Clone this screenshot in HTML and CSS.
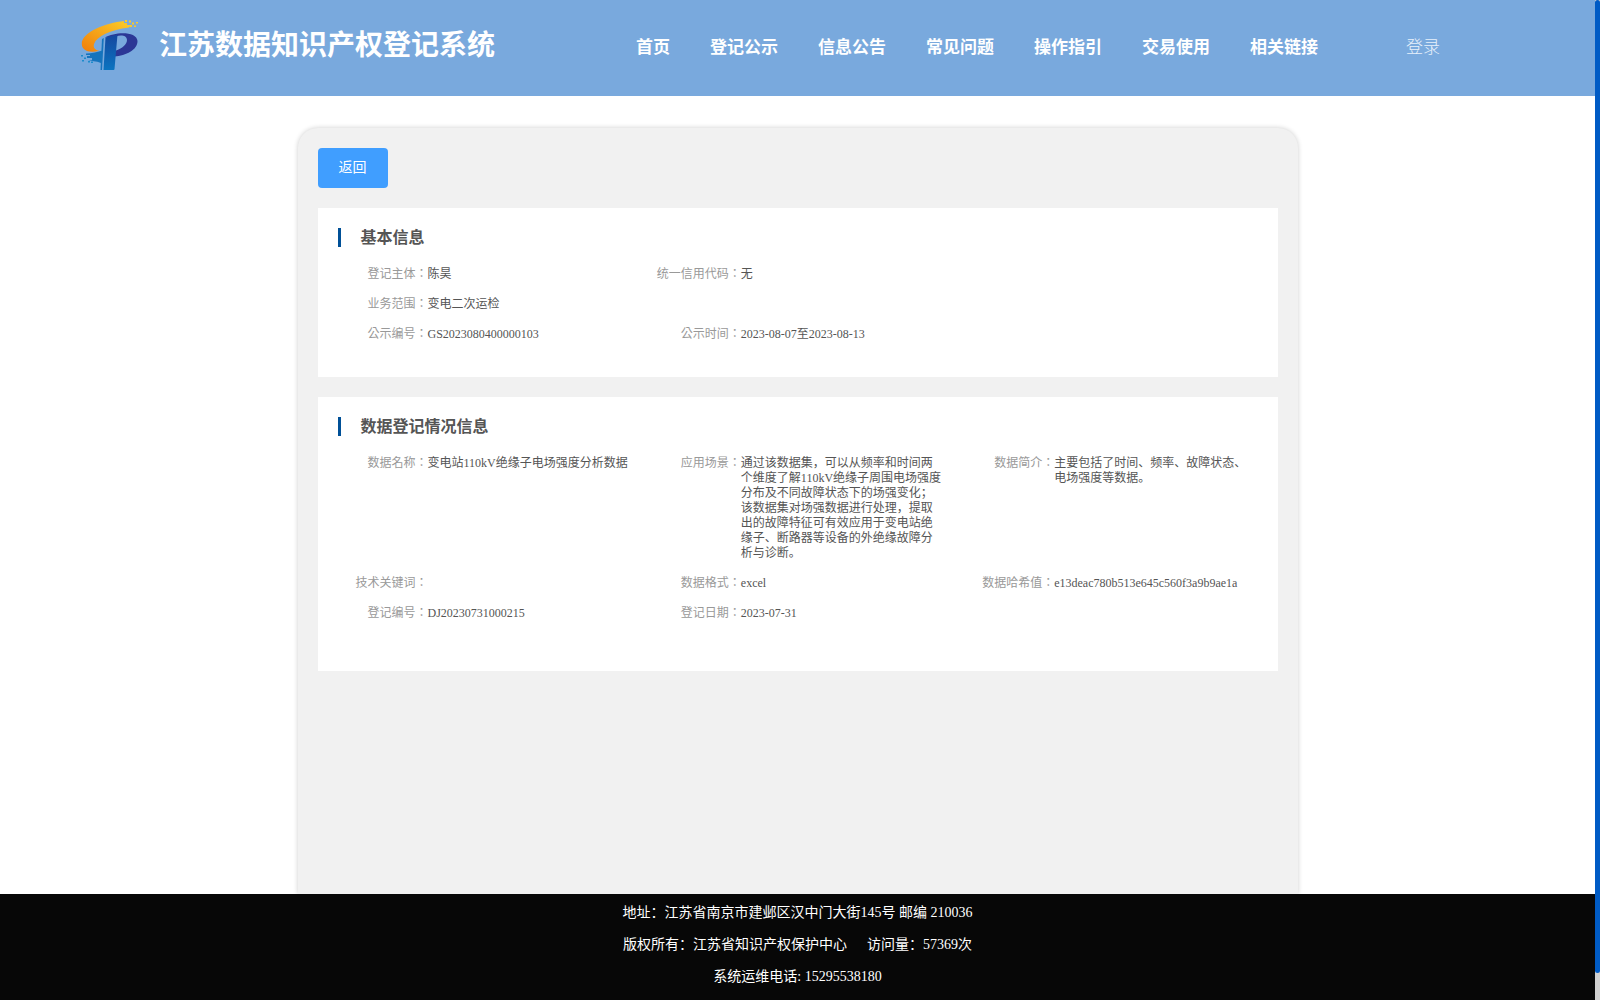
FILE: index.html
```
<!DOCTYPE html>
<html lang="zh-CN">

<head>
    <meta charset="UTF-8">
    <meta name="viewport" content="width=device-width, initial-scale=1.0">
    <title>江苏数据知识产权登记系统</title>
    <link rel="stylesheet" href="styles.css">
</head>

<body>
    <div class="page">
        <!-- 顶部导航 -->
        <header class="header">
            <svg class="logo" viewBox="0 0 60 52">
                <defs>
                    <linearGradient id="orange" x1="0" y1="1" x2="1" y2="0">
                        <stop offset="0" stop-color="#f07d0a" />
                        <stop offset="1" stop-color="#fccf2a" />
                    </linearGradient>
                    <linearGradient id="blue" x1="0" y1="0" x2="0" y2="1">
                        <stop offset="0" stop-color="#15479f" />
                        <stop offset="1" stop-color="#0b74c0" />
                    </linearGradient>
                </defs>
                <path fill="url(#orange)" d="M44 2C26 4 1.500 13 1.800 25C2 31 8 34.500 19.500 31.800C15 31 13 29 14 25C17 17 30 11 49 8.500L51 6H47V4H44Z" />
                <path fill="#fdc928" d="M45 1h2v2h-2zM49 1.500h2v2h-2zM52 3.500h2v2h-2zM50 6h2v2h-2zM56 3h2v1.500h-2zM54 6.500h2v1.500h-2z" />
                <path fill="#1674bd" d="M6 34.500C12 34.500 18 33 22.500 31.500L21 44C16 42 11 42 8 41H12V39H7V37H10V36H6Z" />
                <path fill="#1c8ccc" d="M1 36h2v1.500H1zM4 38.500h2V40H4zM2 41h2v1.500H2zM8 42h2v1.500H8zM11 42.500h2V44h-2z" />
                <path fill="#2c3795" d="M25 18.500C35 12.500 57 12 57.500 22C57.500 31 46 36.500 34.500 37.500V32C43 29.500 47 25 47 21C47 16.500 41 15.500 36 17.500Z" />
                <path fill="url(#blue)" d="M25.500 18.500L37.500 15.500L34.500 50Q34.500 51 33.500 51H23.500Z" />
                <path fill="#1674bd" d="M23.800 19L22 51H20.500L22 20Z" />
            </svg>
            <h1 class="site-name">江苏数据知识产权登记系统</h1>
            <nav class="nav">
                <a>首页</a>
                <a>登记公示</a>
                <a>信息公告</a>
                <a>常见问题</a>
                <a>操作指引</a>
                <a>交易使用</a>
                <a>相关链接</a>
            </nav>
            <a class="login">登录</a>
        </header>

        <!-- 详情 -->
        <main class="content">
            <button class="back">返回</button>

            <section class="panel">
                <h2 class="panel-title">基本信息</h2>
                <div class="info">
                    <div class="item">
                        <span class="label" lang="zh-TW">登记主体：</span>
                        <span class="value">陈昊</span>
                    </div>
                    <div class="item wide">
                        <span class="label" lang="zh-TW">统一信用代码：</span>
                        <span class="value">无</span>
                    </div>
                    <div class="item full">
                        <span class="label" lang="zh-TW">业务范围：</span>
                        <span class="value">变电二次运检</span>
                    </div>
                    <div class="item">
                        <span class="label" lang="zh-TW">公示编号：</span>
                        <span class="value">GS2023080400000103</span>
                    </div>
                    <div class="item wide">
                        <span class="label" lang="zh-TW">公示时间：</span>
                        <span class="value">2023-08-07至2023-08-13</span>
                    </div>
                </div>
            </section>

            <section class="panel register">
                <h2 class="panel-title">数据登记情况信息</h2>
                <div class="info">
                    <div class="item">
                        <span class="label" lang="zh-TW">数据名称：</span>
                        <span class="value">变电站110kV绝缘子电场强度分析数据</span>
                    </div>
                    <div class="item">
                        <span class="label" lang="zh-TW">应用场景：</span>
                        <span class="value">通过该数据集，可以从频率和时间两个维度了解110kV绝缘子周围电场强度分布及不同故障状态下的场强变化；该数据集对场强数据进行处理，提取出的故障特征可有效应用于变电站绝缘子、断路器等设备的外绝缘故障分析与诊断。</span>
                    </div>
                    <div class="item">
                        <span class="label" lang="zh-TW">数据简介：</span>
                        <span class="value">主要包括了时间、频率、故障状态、电场强度等数据。</span>
                    </div>
                    <div class="item">
                        <span class="label" lang="zh-TW">技术关键词：</span>
                        <span class="value"></span>
                    </div>
                    <div class="item">
                        <span class="label" lang="zh-TW">数据格式：</span>
                        <span class="value">excel</span>
                    </div>
                    <div class="item">
                        <span class="label" lang="zh-TW">数据哈希值：</span>
                        <span class="value">e13deac780b513e645c560f3a9b9ae1a</span>
                    </div>
                    <div class="item">
                        <span class="label" lang="zh-TW">登记编号：</span>
                        <span class="value">DJ20230731000215</span>
                    </div>
                    <div class="item">
                        <span class="label" lang="zh-TW">登记日期：</span>
                        <span class="value">2023-07-31</span>
                    </div>
                </div>
            </section>
        </main>

        <!-- 页脚 -->
        <footer class="footer">
            <p>地址：江苏省南京市建邺区汉中门大街145号 邮编 210036</p>
            <p>版权所有：江苏省知识产权保护中心<span class="visits">访问量：57369次</span></p>
            <p>系统运维电话: 15295538180</p>
        </footer>
    </div>

    <!-- 滚动条 -->
    <div class="scrollbar">
        <div class="thumb"></div>
    </div>
</body>

</html>
```

FILE: styles.css
```
* {
    box-sizing: border-box;
    margin: 0;
    padding: 0;
}

body {
    display: flex;
    height: 100vh;
    overflow: hidden;
    background-color: #fff;
    font-family: "Liberation Serif", "Noto Sans CJK SC", serif;
}

.page {
    flex: 1;
    display: flex;
    flex-direction: column;
    height: 100vh;
}

/* 顶部导航 */
.header {
    flex: none;
    display: flex;
    align-items: center;
    height: 96px;
    padding: 0 0 4px 80px;
    background-color: #79a9dd;
    color: #fff;
}

.logo {
    width: 60px;
    height: 52px;
    margin-bottom: 2px;
}

.site-name {
    margin-left: 19px;
    width: 336px;
    font-size: 28px;
    line-height: 40px;
    font-weight: bold;
    white-space: nowrap;
}

.nav {
    display: flex;
    gap: 40px;
    margin-left: 141px;
    padding-top: 4px;
    font-size: 17px;
    line-height: 24px;
    font-weight: bold;
    white-space: nowrap;
}

.login {
    margin-left: 88px;
    padding-top: 4px;
    font-size: 17px;
    line-height: 24px;
    font-weight: 300;
    color: #e8f1fb;
}

/* 内容区 */
.content {
    flex: 1;
    width: 1000px;
    margin: 32px auto 0;
    padding: 20px;
    border-radius: 20px 20px 0 0;
    background-color: #f1f1f1;
    box-shadow: 0 0 5px rgba(0, 0, 0, 0.2);
}

.back {
    display: block;
    width: 70px;
    height: 40px;
    margin-bottom: 20px;
    border: none;
    border-radius: 4px;
    background-color: #409eff;
    color: #fff;
    font-family: inherit;
    font-size: 14px;
    line-height: 40px;
}

.panel {
    height: 169px;
    margin-bottom: 20px;
    padding: 20px 0 0 20px;
    background-color: #fff;
}

.register {
    height: 274px;
}

.panel-title {
    height: 19px;
    padding-left: 20px;
    border-left: 3px solid #005097;
    font-size: 16px;
    line-height: 19px;
    color: #555;
}

.info {
    display: grid;
    grid-template-columns: repeat(3, 1fr);
    row-gap: 15px;
    margin-top: 20px;
    font-size: 12px;
    line-height: 15px;
}

.item {
    display: flex;
    min-height: 15px;
}

.wide {
    grid-column: span 2;
}

.full {
    grid-column: span 3;
}

/* 繁体字形的冒号居中 */
.label {
    flex: none;
    width: 90px;
    font-family: "Liberation Serif", "Noto Sans CJK TC", serif;
    text-align: right;
    color: #999;
    white-space: nowrap;
}

.value {
    width: 201px;
    color: #555;
}

/* 页脚 */
.footer {
    flex: none;
    height: 106px;
    padding-top: 3px;
    background-color: #070707;
    color: #fff;
    font-size: 14px;
    line-height: 32px;
    text-align: center;
}

.visits {
    margin-left: 20px;
}

/* 滚动条 */
.scrollbar {
    width: 5px;
    background-color: #d0d0d0;
}

.thumb {
    height: 973px;
    border-radius: 3px;
    background-color: #005bc5;
}
```
